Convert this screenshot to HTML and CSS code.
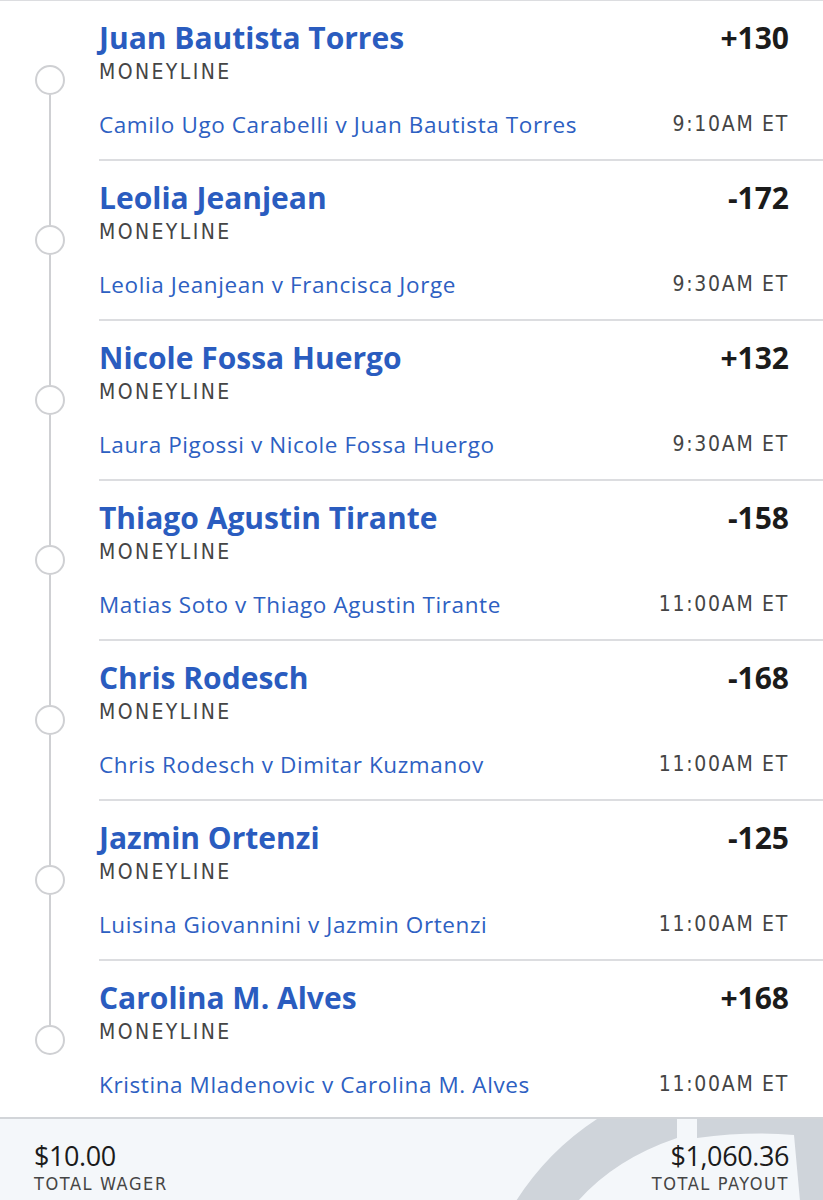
FILE: index.html
```html
<!DOCTYPE html>
<html lang="en">
<head>
    <meta charset="UTF-8">
    <title>Bet slip</title>
    <link rel="stylesheet" href="styles.css">
</head>
<body>

    <!-- Liste des paris -->
    <div class="legs">
        <div class="leg first">
            <div class="rail"><span class="seg-top"></span><span class="dot"></span><span class="seg-bottom"></span></div>
            <div class="leg-body">
                <div class="leg-top">
                    <span class="pick">Juan Bautista Torres</span>
                    <span class="odds">+130</span>
                </div>
                <div class="market">MONEYLINE</div>
                <div class="leg-bottom">
                    <span class="match">Camilo Ugo Carabelli v Juan Bautista Torres</span>
                    <span class="time">9:10AM ET</span>
                </div>
            </div>
        </div>

        <div class="leg">
            <div class="rail"><span class="seg-top"></span><span class="dot"></span><span class="seg-bottom"></span></div>
            <div class="leg-body">
                <div class="leg-top">
                    <span class="pick">Leolia Jeanjean</span>
                    <span class="odds">-172</span>
                </div>
                <div class="market">MONEYLINE</div>
                <div class="leg-bottom">
                    <span class="match">Leolia Jeanjean v Francisca Jorge</span>
                    <span class="time">9:30AM ET</span>
                </div>
            </div>
        </div>

        <div class="leg">
            <div class="rail"><span class="seg-top"></span><span class="dot"></span><span class="seg-bottom"></span></div>
            <div class="leg-body">
                <div class="leg-top">
                    <span class="pick">Nicole Fossa Huergo</span>
                    <span class="odds">+132</span>
                </div>
                <div class="market">MONEYLINE</div>
                <div class="leg-bottom">
                    <span class="match">Laura Pigossi v Nicole Fossa Huergo</span>
                    <span class="time">9:30AM ET</span>
                </div>
            </div>
        </div>

        <div class="leg">
            <div class="rail"><span class="seg-top"></span><span class="dot"></span><span class="seg-bottom"></span></div>
            <div class="leg-body">
                <div class="leg-top">
                    <span class="pick">Thiago Agustin Tirante</span>
                    <span class="odds">-158</span>
                </div>
                <div class="market">MONEYLINE</div>
                <div class="leg-bottom">
                    <span class="match">Matias Soto v Thiago Agustin Tirante</span>
                    <span class="time">11:00AM ET</span>
                </div>
            </div>
        </div>

        <div class="leg">
            <div class="rail"><span class="seg-top"></span><span class="dot"></span><span class="seg-bottom"></span></div>
            <div class="leg-body">
                <div class="leg-top">
                    <span class="pick">Chris Rodesch</span>
                    <span class="odds">-168</span>
                </div>
                <div class="market">MONEYLINE</div>
                <div class="leg-bottom">
                    <span class="match">Chris Rodesch v Dimitar Kuzmanov</span>
                    <span class="time">11:00AM ET</span>
                </div>
            </div>
        </div>

        <div class="leg">
            <div class="rail"><span class="seg-top"></span><span class="dot"></span><span class="seg-bottom"></span></div>
            <div class="leg-body">
                <div class="leg-top">
                    <span class="pick">Jazmin Ortenzi</span>
                    <span class="odds">-125</span>
                </div>
                <div class="market">MONEYLINE</div>
                <div class="leg-bottom">
                    <span class="match">Luisina Giovannini v Jazmin Ortenzi</span>
                    <span class="time">11:00AM ET</span>
                </div>
            </div>
        </div>

        <div class="leg last">
            <div class="rail"><span class="seg-top"></span><span class="dot"></span><span class="seg-bottom"></span></div>
            <div class="leg-body">
                <div class="leg-top">
                    <span class="pick">Carolina M. Alves</span>
                    <span class="odds">+168</span>
                </div>
                <div class="market">MONEYLINE</div>
                <div class="leg-bottom">
                    <span class="match">Kristina Mladenovic v Carolina M. Alves</span>
                    <span class="time">11:00AM ET</span>
                </div>
            </div>
        </div>
    </div>

    <!-- Totaux -->
    <div class="totals">
        <svg class="totals-art" width="823" height="82" viewBox="0 0 823 82">
            <path d="M597,0 L677,0 L677,19 Q615,40 578,82 L516,82 Q548,32 597,0 Z" fill="#cfd4da"/>
            <path d="M697,0 L823,0 L823,82 L800,82 L794,16 Q750,12 697,19 Z" fill="#cfd4da"/>
        </svg>
        <div class="total">
            <div class="amount">$10.00</div>
            <div class="label">TOTAL WAGER</div>
        </div>
        <div class="total right">
            <div class="amount">$1,060.36</div>
            <div class="label">TOTAL PAYOUT</div>
        </div>
    </div>

</body>
</html>
```
FILE: styles.css
```css
body {
    margin: 0;
    background: #fff;
    font-family: "Open Sans", Lato, sans-serif;
    border-top: 1px solid #dcdde0;
}

.legs {
    display: flex;
    flex-direction: column;
}

.leg {
    display: flex;
    height: 160px;
}

.leg.last {
    height: 156px;
}

/* Ligne verticale avec cercles */
.rail {
    width: 99px;
    flex-shrink: 0;
    display: flex;
    flex-direction: column;
    align-items: center;
}

.seg-top {
    width: 2px;
    height: 64px;
    background: #cfd0d3;
}

.seg-bottom {
    width: 2px;
    flex: 1;
    background: #cfd0d3;
}

.leg.first .seg-top,
.leg.last .seg-bottom {
    background: transparent;
}

.dot {
    width: 26px;
    height: 26px;
    border: 2px solid #cfd0d3;
    border-radius: 50%;
    flex-shrink: 0;
}

.leg-body {
    flex: 1;
    padding-right: 34px;
    border-bottom: 2px solid #dcdde0;
}

.leg.last .leg-body {
    border-bottom: none;
}

.leg-top {
    display: flex;
    justify-content: space-between;
    align-items: baseline;
    margin-top: 19px;
    height: 36px;
    line-height: 36px;
}

.pick {
    font-size: 30px;
    font-weight: bold;
    color: #2a5cbf;
}

.odds {
    font-size: 30px;
    font-weight: bold;
    color: #1b1b1b;
}

.market {
    font-family: "Liberation Sans Narrow", "DejaVu Sans Condensed", sans-serif;
    font-size: 21px;
    letter-spacing: 2.4px;
    color: #454545;
    line-height: 26px;
    margin-top: 3px;
}

.leg-bottom {
    display: flex;
    justify-content: space-between;
    align-items: baseline;
    margin-top: 25px;
    line-height: 30px;
}

.match {
    font-size: 22.5px;
    letter-spacing: 0.6px;
    color: #2d60c2;
}

.time {
    font-family: "Liberation Sans Narrow", "DejaVu Sans Condensed", sans-serif;
    font-size: 21px;
    letter-spacing: 1.7px;
    color: #454545;
    position: relative;
    top: -2px;
}

/* Pied de page */
.totals {
    position: relative;
    height: 82px;
    border-top: 2px solid #d2d5d9;
    background: #f4f7fa;
    display: flex;
    justify-content: space-between;
    padding: 0 34px;
    overflow: hidden;
}

.totals-art {
    position: absolute;
    left: 0;
    top: 0;
}

.total {
    position: relative;
    padding-top: 22px;
}

.total.right {
    text-align: right;
}

.amount {
    font-size: 27px;
    color: #1b1b1b;
    line-height: 30px;
    letter-spacing: -0.4px;
}

.label {
    font-family: "Liberation Sans Narrow", "DejaVu Sans Condensed", sans-serif;
    font-size: 18px;
    letter-spacing: 1.6px;
    color: #454545;
    line-height: 24px;
    margin-top: 1px;
}
```
